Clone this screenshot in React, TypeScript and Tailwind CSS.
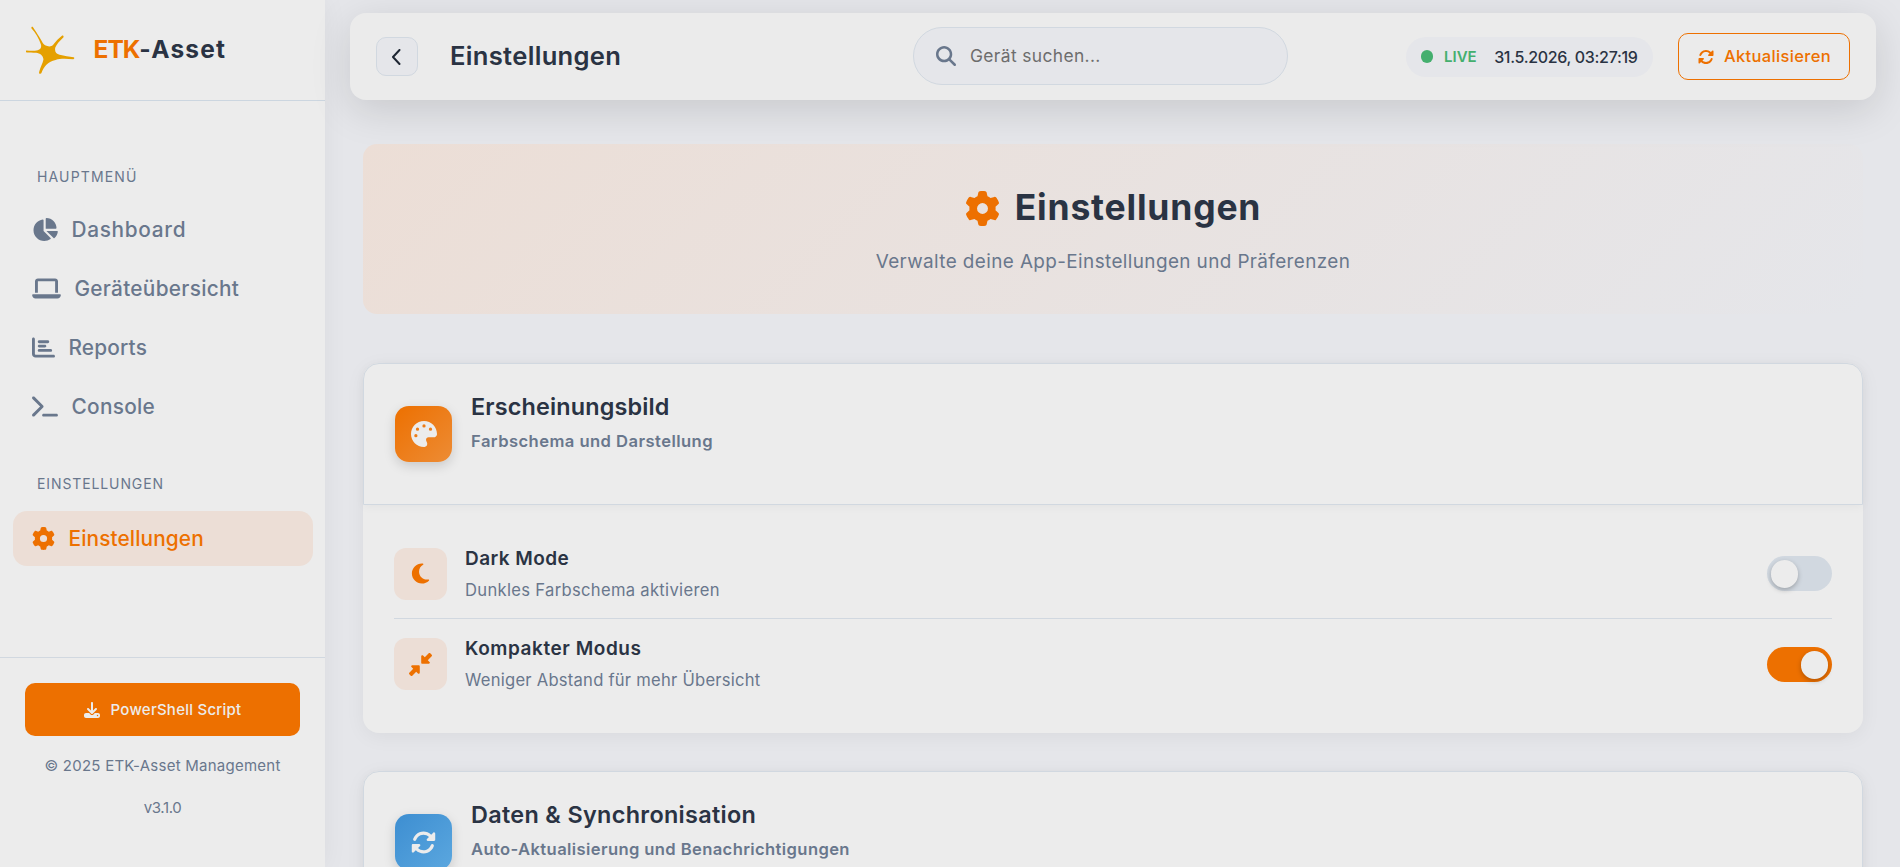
import type { ReactNode } from 'react';
import {
  FaChartBar,
  FaChartPie,
  FaDownLeftAndUpRightToCenter,
  FaDownload,
  FaGear,
  FaLaptop,
  FaMagnifyingGlass,
  FaMoon,
  FaPalette,
  FaRotate,
  FaTerminal,
} from 'react-icons/fa6';

const menu = [
  {
    label: 'Dashboard',
    icon: <FaChartPie className="h-[23px] w-[26px]" />,
    tracking: 'tracking-[0.69px]',
  },
  {
    label: 'Geräteübersicht',
    icon: <FaLaptop className="h-[23px] w-[29px]" />,
    tracking: 'tracking-[0.29px]',
  },
  {
    label: 'Reports',
    icon: <FaChartBar className="h-[23px] w-[23px]" />,
    tracking: 'tracking-[0.17px]',
  },
  {
    label: 'Console',
    icon: <FaTerminal className="h-[23px] w-[26px]" />,
    tracking: 'tracking-[0.29px]',
  },
];

const appearance = [
  {
    title: 'Dark Mode',
    text: 'Dunkles Farbschema aktivieren',
    icon: <FaMoon className="size-[23px]" />,
    on: false,
    titleTracking: 'tracking-[0.44px]',
    textTracking: 'tracking-[0.31px]',
  },
  {
    title: 'Kompakter Modus',
    text: 'Weniger Abstand für mehr Übersicht',
    icon: <FaDownLeftAndUpRightToCenter className="size-[23px]" />,
    on: true,
    titleTracking: 'tracking-[0.56px]',
    textTracking: 'tracking-[0.24px]',
  },
];

function Logo() {
  return (
    <svg viewBox="18 18 146 146" className="size-[49px] shrink-0" fill="#e5a000">
      <path d="M39 22C52 42 64 60 68 69C75 80 93 82 99 74C107 63 116 54 125 47C128 45 132 49 129 52C118 63 108 73 105 83C103 96 108 101 118 104C132 108 147 109 160 111C163 112 162 117 159 117C142 116 122 114 106 119C84 125 72 136 64 158C63 162 56 161 57 156C60 141 68 130 70 118C69 106 60 100 48 98C38 97 28 97 20 97C17 96 17 91 20 91C32 92 44 92 53 90C62 87 65 81 62 72C57 56 46 38 34 25C33 21 37 19 39 22Z" />
    </svg>
  );
}

function Toggle({ on }: { on: boolean }) {
  return (
    <button
      className={
        on
          ? 'flex h-[35px] w-[65px] items-center justify-end rounded-full bg-[#ed7000] px-1'
          : 'flex h-[35px] w-[65px] items-center justify-start rounded-full bg-[#d1d8e0] px-1'
      }
    >
      <span className="mt-px h-7 w-[27px] rounded-full bg-[#ececec] shadow-[0_2px_5px_rgba(0,0,0,0.25)]" />
    </button>
  );
}

type SectionHeadProps = {
  icon: ReactNode;
  iconBg: string;
  title: ReactNode;
  text: ReactNode;
};

function SectionHead({ icon, iconBg, title, text }: SectionHeadProps) {
  return (
    <div className="flex h-[142px] items-start gap-[19px] rounded-t-2xl border border-[#d1d8e0] bg-[#ececec] px-[31px] shadow-[0_2px_10px_rgba(0,0,0,0.04)]">
      <div
        className={`mt-[42px] flex h-14 w-[57px] items-center justify-center rounded-[14px] text-[#ececec] shadow-[0_4px_12px_rgba(0,0,0,0.15)] ${iconBg}`}
      >
        {icon}
      </div>
      <div>
        <h2 className="mt-[27px] text-[23.4px] leading-8 font-semibold text-[#2a3343]">{title}</h2>
        <p className="mt-1 text-[16.6px] leading-7 font-semibold text-[#69778c]">{text}</p>
      </div>
    </div>
  );
}

export default function App() {
  return (
    <div className="flex h-[867px] w-[1900px] overflow-hidden bg-[#e5e6ea] font-['Inter',sans-serif]">
      {/* Sidebar */}
      <aside className="flex w-[325px] shrink-0 flex-col bg-[#ececec] text-[#69778c] shadow-[0_0_24px_rgba(0,0,0,0.05)]">
        <div className="flex h-[101px] items-center gap-[18.5px] border-b border-[#ccd6e0] pl-[26px]">
          <Logo />
          <div className="-mt-0.5 text-[24.5px] leading-8 font-bold tracking-[1.2px] text-[#2a3343]">
            <span className="tracking-[-1px] text-[#ed7000]">ETK</span>-Asset
          </div>
        </div>

        <nav className="flex-1 pt-[66px] pr-3 pl-[13px]">
          <div className="mb-[15px] h-5 pl-6 text-sm tracking-[1.15px]">HAUPTMENÜ</div>
          <div className="flex flex-col gap-1">
            {menu.map((item) => (
              <a key={item.label} className="flex h-[55px] items-center gap-[14px] pl-[18.5px]">
                {item.icon}
                <span className={`text-[20.8px] font-medium ${item.tracking}`}>{item.label}</span>
              </a>
            ))}
          </div>
          <div className="mt-10 mb-[17px] h-5 pl-6 text-sm tracking-[0.89px]">EINSTELLUNGEN</div>
          <a className="flex h-[55px] items-center gap-[14px] rounded-[14px] bg-[#ecded6] pl-[18.5px] text-[#ed7000]">
            <FaGear className="size-[23px]" />
            <span className="text-[20.8px] font-medium tracking-[0.12px]">Einstellungen</span>
          </a>
        </nav>

        <div className="flex h-[210px] flex-col items-center border-t border-[#d1d8e0] px-[25px] pt-[25px] text-[15px] leading-6">
          <button className="flex h-[53px] w-full items-center justify-center gap-[11px] rounded-[10px] bg-[#ed7000] font-medium tracking-[0.24px] text-[#ececec]">
            <FaDownload className="size-4" />
            PowerShell Script
          </button>
          <p className="mt-[18px] tracking-[0.25px] whitespace-nowrap">© 2025 ETK-Asset Management</p>
          <p className="mt-[18px] tracking-[-0.38px]">v3.1.0</p>
        </div>
      </aside>

      <main className="min-w-0 flex-1">
        {/* Top bar */}
        <header className="mt-[13px] ml-[25px] flex h-[87px] w-[1526px] items-center rounded-2xl bg-[#ebebeb] pr-[26px] pl-[26px] shadow-[0_10px_40px_rgba(0,0,0,0.13)]">
          <button className="flex h-[39px] w-[42px] items-center justify-center rounded-[10px] border border-[#d1d8e0] bg-[#e5e6ea] pr-0.5">
            <svg viewBox="0 0 10 16" className="h-4 w-2.5" fill="none" stroke="#1e2633" strokeWidth="2">
              <path d="M8.5 1L2 8l6.5 7" strokeLinecap="round" strokeLinejoin="round" />
            </svg>
          </button>
          <h1 className="-mt-px ml-8 w-[463px] text-[25.6px] font-semibold tracking-[0.3px] text-[#2a3343]">
            Einstellungen
          </h1>
          <div className="-mt-0.5 flex h-[58px] w-[375px] items-center rounded-full border border-[#d1d8e0] bg-[#e5e6ea] pl-[22px]">
            <FaMagnifyingGlass className="size-5 text-[#69778c]" />
            <input
              placeholder="Gerät suchen..."
              className="mt-0.5 ml-3.5 w-60 bg-transparent text-[17.4px] tracking-[0.37px] outline-none placeholder:text-[#6d6d6d]"
            />
          </div>
          <div className="ml-auto flex h-10 w-[247px] items-center rounded-full bg-[#e5e6ea] pl-[15px] whitespace-nowrap">
            <span className="h-[13px] w-3 rounded-full bg-[#44af6e]" />
            <span className="mt-px ml-[11px] text-[15px] font-semibold text-[#44af6e]">LIVE</span>
            <span className="ml-[17.5px] text-base font-medium tracking-[-0.32px] text-[#2a3343]">
              31.5.2026, 03:27:19
            </span>
          </div>
          <button className="ml-[25px] flex h-[47px] w-[172px] items-center gap-[10px] rounded-[10px] border border-[#ed7000] pl-[19px] text-[16.5px] font-medium tracking-[0.34px] text-[#ed7000]">
            <FaRotate className="size-4" />
            Aktualisieren
          </button>
        </header>

        <div className="ml-[38px] w-[1500px] pt-11">
          {/* Hero */}
          <section className="flex h-[170px] flex-col items-center rounded-[14px] bg-[linear-gradient(135deg,#ecded6,#ecded600)] pt-[42px]">
            <div className="flex h-11 items-center gap-[15px] text-[#2a3343]">
              <FaGear className="size-[35px] text-[#ed7000]" />
              <span className="text-[35.5px] leading-none font-bold tracking-[0.8px]">Einstellungen</span>
            </div>
            <p className="mt-[17px] text-[18.9px] leading-[30px] tracking-[0.4px] text-[#69778c]">
              Verwalte deine App-Einstellungen und Präferenzen
            </p>
          </section>

          {/* Appearance */}
          <section className="mt-[49px] h-[370px] rounded-2xl bg-[#ececec] shadow-[0_4px_20px_rgba(0,0,0,0.05)]">
            <SectionHead
              icon={<FaPalette className="size-[26px]" />}
              iconBg="bg-[linear-gradient(135deg,#ed7000,#ed8c35)]"
              title={<span className="tracking-[0.15px]">Erscheinungsbild</span>}
              text={<span className="tracking-[0.44px]">Farbschema und Darstellung</span>}
            />
            <div className="divide-y divide-[#d1d8e0] px-[31px] pt-6">
              {appearance.map((row) => (
                <div key={row.title} className="flex h-[90px] items-center">
                  <div className="flex h-[52px] w-[53px] items-center justify-center rounded-xl bg-[#ecded6] text-[#ed7000]">
                    {row.icon}
                  </div>
                  <div className="ml-[18px] flex-1">
                    <div className={`text-[19px] leading-8 font-semibold text-[#2a3343] ${row.titleTracking}`}>
                      {row.title}
                    </div>
                    <div className={`text-[16.6px] leading-[30px] text-[#69778c] ${row.textTracking}`}>
                      {row.text}
                    </div>
                  </div>
                  <Toggle on={row.on} />
                </div>
              ))}
            </div>
          </section>

          {/* Data & sync */}
          <section className="mt-[38px] h-[370px] rounded-2xl bg-[#ececec] shadow-[0_4px_20px_rgba(0,0,0,0.05)]">
            <SectionHead
              icon={<FaRotate className="size-[25px]" />}
              iconBg="bg-[linear-gradient(135deg,#3d8ed1,#5ba7df)]"
              title={<span className="tracking-[0.33px]">Daten &amp; Synchronisation</span>}
              text={<span className="tracking-[0.38px]">Auto-Aktualisierung und Benachrichtigungen</span>}
            />
          </section>
        </div>
      </main>
    </div>
  );
}
